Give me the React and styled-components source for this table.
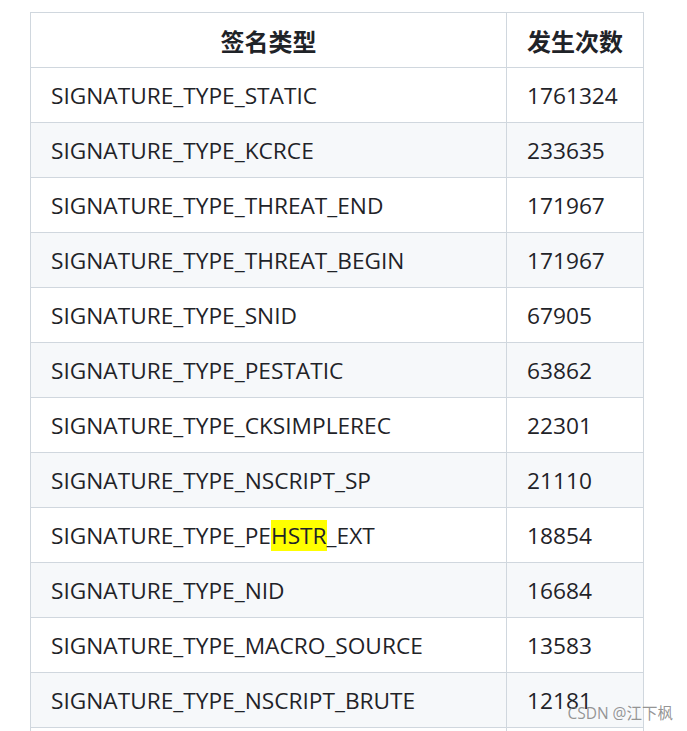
import styled, { createGlobalStyle } from "styled-components";

const GlobalStyle = createGlobalStyle`
  body {
    margin: 0;
    background: #fff;
    font-family: "Open Sans", "Noto Sans CJK SC", sans-serif;
  }
`;

const Page = styled.div`
  position: relative;
  height: 731px;
  overflow: hidden;
  padding: 12px 0 0 30px;
  box-sizing: border-box;
`;

const Table = styled.table`
  border-collapse: collapse;
  width: 614px;
  color: #1f2328;
  font-size: 22.7px;
`;

const HeadCell = styled.th`
  border: 1px solid #d0d7de;
  height: 54px;
  padding: 0 20px;
  font-weight: 700;
  text-align: center;
  font-family: "Noto Sans CJK SC", sans-serif;
  font-size: 24px;
`;

const Row = styled.tr`
  background: ${(p) => (p.$alt ? "#f6f8fa" : "#fff")};
`;

const Cell = styled.td`
  border: 1px solid #d0d7de;
  height: 55px;
  padding: 0 20px;
  box-sizing: border-box;
  width: ${(p) => p.$w || "auto"};
`;

const Mark = styled.mark`
  background: #ffff00;
  color: inherit;
`;

const Watermark = styled.div`
  position: absolute;
  right: 14px;
  bottom: 7px;
  font-family: "Open Sans", "Noto Sans CJK SC", sans-serif;
  font-size: 15.5px;
  color: rgba(130, 130, 130, 0.85);
`;

const rows = [
  ["SIGNATURE_TYPE_STATIC", "1761324"],
  ["SIGNATURE_TYPE_KCRCE", "233635"],
  ["SIGNATURE_TYPE_THREAT_END", "171967"],
  ["SIGNATURE_TYPE_THREAT_BEGIN", "171967"],
  ["SIGNATURE_TYPE_SNID", "67905"],
  ["SIGNATURE_TYPE_PESTATIC", "63862"],
  ["SIGNATURE_TYPE_CKSIMPLEREC", "22301"],
  ["SIGNATURE_TYPE_NSCRIPT_SP", "21110"],
  ["HSTR", "18854"],
  ["SIGNATURE_TYPE_NID", "16684"],
  ["SIGNATURE_TYPE_MACRO_SOURCE", "13583"],
  ["SIGNATURE_TYPE_NSCRIPT_BRUTE", "12181"],
  ["", ""],
];

export default function App() {
  return (
    <Page>
      <GlobalStyle />
      <Table>
        <thead>
          <tr>
            <HeadCell>签名类型</HeadCell>
            <HeadCell>发生次数</HeadCell>
          </tr>
        </thead>
        <tbody>
          {rows.map(([name, count], i) => (
            <Row key={i} $alt={i % 2 === 1}>
              <Cell>
                {name === "HSTR" ? (
                  <>
                    SIGNATURE_TYPE_PE<Mark>HSTR</Mark>_EXT
                  </>
                ) : (
                  name
                )}
              </Cell>
              <Cell $w="137px">{count}</Cell>
            </Row>
          ))}
        </tbody>
      </Table>
      <Watermark>CSDN @江下枫</Watermark>
    </Page>
  );
}
